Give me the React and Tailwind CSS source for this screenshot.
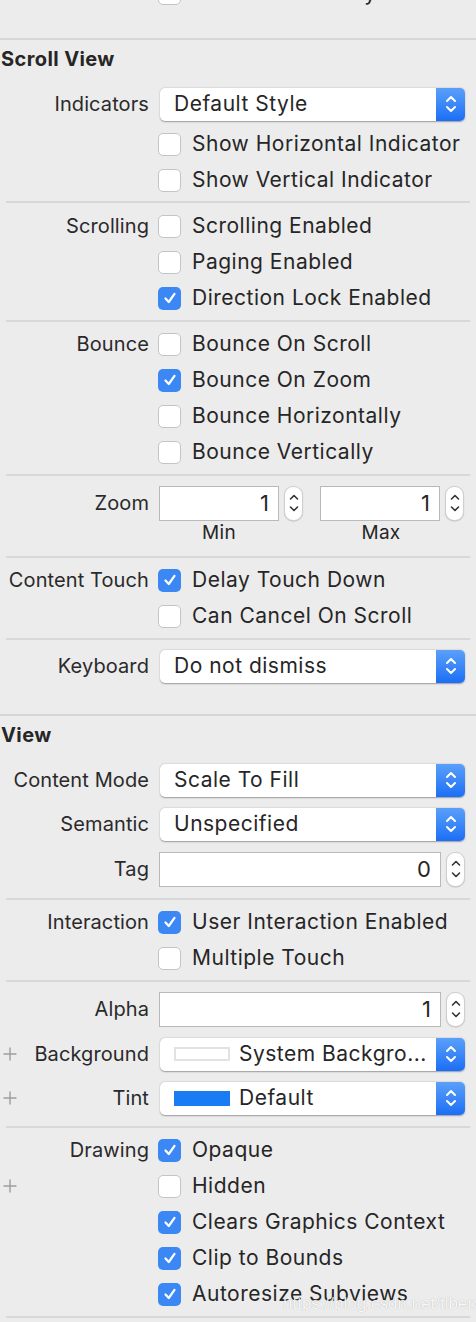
import React from "react";

const FONT = { fontFamily: '"Inter", "Noto Sans", sans-serif' };

function Check({ on }) {
  if (on) {
    return (
      <div className="w-[23px] h-[23px] rounded-[5px] bg-[#3b88f5] flex items-center justify-center shrink-0">
        <svg width="14" height="14" viewBox="0 0 14 14">
          <path d="M2.5 7.5 L5.8 11 L11.5 2.8" fill="none" stroke="white" strokeWidth="2.2" strokeLinecap="round" strokeLinejoin="round" />
        </svg>
      </div>
    );
  }
  return <div className="w-[23px] h-[23px] rounded-[5px] bg-white border border-[#c4c4c4] shrink-0" />;
}

function Plus() {
  return (
    <svg width="14" height="14" viewBox="0 0 14 14" className="ml-[3px]">
      <path d="M7 0.5 V13.5 M0.5 7 H13.5" stroke="#9d9d9d" strokeWidth="1.4" />
    </svg>
  );
}

function Label({ text, plus }) {
  return (
    <div className="w-[149px] shrink-0 flex items-center justify-between">
      <div>{plus ? <Plus /> : null}</div>
      <span className="text-[20px] text-[#2a2a2a] whitespace-nowrap tracking-[0.1px]">{text}</span>
    </div>
  );
}

function CheckRow({ label, text, on, plus, className = "" }) {
  return (
    <div className={"h-[36px] flex items-center " + className}>
      <Label text={label} plus={plus} />
      <div className="ml-[9px] flex items-center">
        <Check on={on} />
        <span className="ml-[11px] text-[21px] text-[#262626] whitespace-nowrap tracking-[0.5px]">{text}</span>
      </div>
    </div>
  );
}

function PopArrows() {
  return (
    <svg width="14" height="22" viewBox="0 0 14 22">
      <path d="M3 8 L7 4 L11 8" fill="none" stroke="white" strokeWidth="2" strokeLinecap="round" strokeLinejoin="round" />
      <path d="M3 14 L7 18 L11 14" fill="none" stroke="white" strokeWidth="2" strokeLinecap="round" strokeLinejoin="round" />
    </svg>
  );
}

function Popup({ text, swatch, className = "" }) {
  return (
    <div className={"ml-[11px] w-[305px] h-[33px] rounded-[5px] bg-white flex items-stretch overflow-hidden shadow-[0_0.5px_1.5px_rgba(0,0,0,0.35)] " + className}>
      <div className="flex-1 flex items-center pl-[14px] min-w-0">
        {swatch === "white" && <div className="w-[56px] h-[14px] bg-white border-[2px] border-[#e2e2e2] mr-[9px] shrink-0" />}
        {swatch === "blue" && <div className="w-[56px] h-[15px] bg-[#1a7cf5] mr-[9px] shrink-0" />}
        <span className="text-[21px] text-[#262626] whitespace-nowrap tracking-[0.5px]">{text}</span>
      </div>
      <div className="w-[29px] bg-gradient-to-b from-[#5a9ff9] to-[#1a6ef6] flex items-center justify-center">
        <PopArrows />
      </div>
    </div>
  );
}

function PopupRow({ label, text, swatch, plus, className = "" }) {
  return (
    <div className={"h-[36px] flex items-center " + className}>
      <Label text={label} plus={plus} />
      <Popup text={text} swatch={swatch} />
    </div>
  );
}

function Stepper() {
  return (
    <div className="w-[19px] h-[35px] rounded-[9px] bg-white border border-[#cfcfcf] shadow-[0_0.5px_1px_rgba(0,0,0,0.2)] flex items-center justify-center shrink-0">
      <svg width="12" height="26" viewBox="0 0 12 26">
        <path d="M2.5 9 L6 5.5 L9.5 9" fill="none" stroke="#333" strokeWidth="1.6" strokeLinecap="round" strokeLinejoin="round" />
        <path d="M2.5 17 L6 20.5 L9.5 17" fill="none" stroke="#333" strokeWidth="1.6" strokeLinecap="round" strokeLinejoin="round" />
      </svg>
    </div>
  );
}

function Field({ value, w }) {
  return (
    <div className={"h-[35px] bg-white border border-[#b9b9b9] flex items-center justify-end pr-[9px] shrink-0 " + w}>
      <span className="text-[22px] text-[#262626]">{value}</span>
    </div>
  );
}

function FieldRow({ label, value, className = "" }) {
  return (
    <div className={"h-[36px] flex items-center " + className}>
      <Label text={label} />
      <div className="ml-[10px] flex items-center gap-[5px]">
        <Field value={value} w="w-[282px]" />
        <Stepper />
      </div>
    </div>
  );
}

function Sep({ className = "" }) {
  return <div className={"mx-[6px] h-[2px] bg-[#d8d8d8] " + className} />;
}

function FullSep({ className = "" }) {
  return <div className={"h-[2px] bg-[#d6d6d6] " + className} />;
}

function Header({ text }) {
  return (
    <div className="h-[38px] flex items-center pl-[1px]">
      <span className="text-[20px] font-bold text-[#262626] tracking-[0.4px]">{text}</span>
    </div>
  );
}

export default function App() {
  return (
    <div className="w-[476px] h-[1322px] bg-[#ececec] overflow-hidden relative" style={FONT}>
      <div className="flex flex-col">
        <CheckRow label="" text="Secure Text Entry" className="mt-[-25px]" />
        <FullSep className="mt-[27px]" />
        <Header text="Scroll View" />
        <PopupRow label="Indicators" text="Default Style" className="mt-[8px]" />
        <CheckRow label="" text="Show Horizontal Indicator" className="mt-[4px]" />
        <CheckRow label="" text="Show Vertical Indicator" />
        <Sep className="mt-[3px]" />
        <CheckRow label="Scrolling" text="Scrolling Enabled" className="mt-[5px]" />
        <CheckRow label="" text="Paging Enabled" />
        <CheckRow label="" text="Direction Lock Enabled" on />
        <Sep className="mt-[4px]" />
        <CheckRow label="Bounce" text="Bounce On Scroll" className="mt-[4px]" />
        <CheckRow label="" text="Bounce On Zoom" on />
        <CheckRow label="" text="Bounce Horizontally" />
        <CheckRow label="" text="Bounce Vertically" />
        <Sep className="mt-[4px]" />
        <div className="mt-[9px] h-[36px] flex items-center">
          <Label text="Zoom" />
          <div className="ml-[10px] flex items-center">
            <Field value="1" w="w-[120px]" />
            <div className="ml-[5px]"><Stepper /></div>
            <div className="ml-[17px]"><Field value="1" w="w-[120px]" /></div>
            <div className="ml-[5px]"><Stepper /></div>
          </div>
        </div>
        <div className="h-[24px] flex items-center">
          <div className="ml-[159px] w-[120px] text-center text-[19px] text-[#262626] tracking-[0.3px]">Min</div>
          <div className="ml-[42px] w-[120px] text-center text-[19px] text-[#262626] tracking-[0.3px]">Max</div>
        </div>
        <Sep className="mt-[11px]" />
        <CheckRow label="Content Touch" text="Delay Touch Down" on className="mt-[4px]" />
        <CheckRow label="" text="Can Cancel On Scroll" />
        <Sep className="mt-[4px]" />
        <PopupRow label="Keyboard" text="Do not dismiss" className="mt-[8px]" />
        <FullSep className="mt-[30px]" />
        <Header text="View" />
        <PopupRow label="Content Mode" text="Scale To Fill" className="mt-[8px]" />
        <PopupRow label="Semantic" text="Unspecified" className="mt-[8px]" />
        <FieldRow label="Tag" value="0" className="mt-[9px]" />
        <Sep className="mt-[11px]" />
        <CheckRow label="Interaction" text="User Interaction Enabled" on className="mt-[4px]" />
        <CheckRow label="" text="Multiple Touch" />
        <Sep className="mt-[4px]" />
        <FieldRow label="Alpha" value="1" className="mt-[9px]" />
        <PopupRow label="Background" text="System Backgro..." swatch="white" plus className="mt-[9px]" />
        <PopupRow label="Tint" text="Default" swatch="blue" plus className="mt-[8px]" />
        <Sep className="mt-[10px]" />
        <CheckRow label="Drawing" text="Opaque" on className="mt-[4px]" />
        <CheckRow label="" text="Hidden" plus />
        <CheckRow label="" text="Clears Graphics Context" on />
        <CheckRow label="" text="Clip to Bounds" on />
        <CheckRow label="" text="Autoresize Subviews" on />
        <Sep className="mt-[4px]" />
      </div>
      <div className="absolute left-[283px] top-[1291px] text-[17px] text-white/90 [text-shadow:0_0_1px_rgba(0,0,0,0.3)] whitespace-nowrap" style={{ fontFamily: '"Liberation Sans", sans-serif' }}>
        https://blog.csdn.net/tiberx
      </div>
    </div>
  );
}
